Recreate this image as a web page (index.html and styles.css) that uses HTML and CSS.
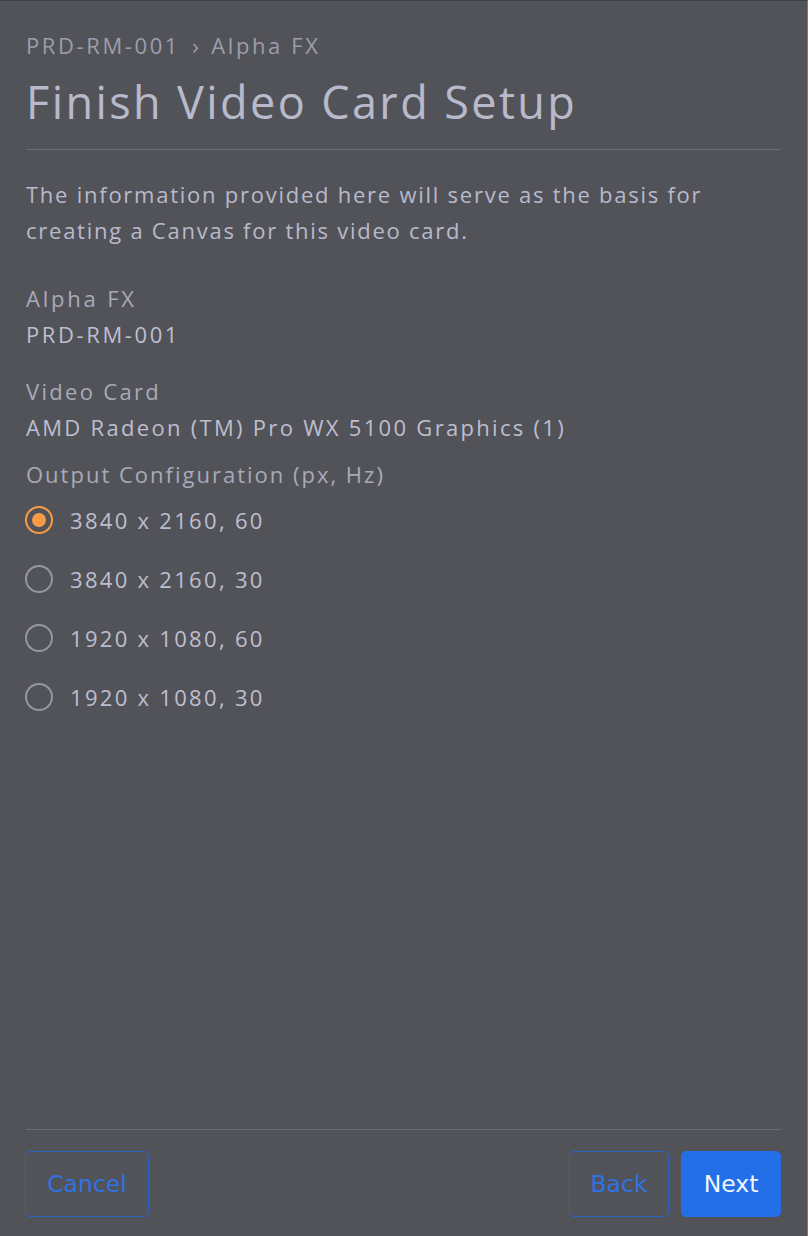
FILE: index.html
```html
<!DOCTYPE html>
<html lang="en">
<head>
<meta charset="utf-8">
<title>Finish Video Card Setup</title>
<link rel="stylesheet" href="styles.css">
</head>
<body>
<div class="page">
  <div class="content">
    <div class="breadcrumb">PRD-RM-001 <span class="sep">›</span> Alpha FX</div>
    <h1 class="title">Finish Video Card Setup</h1>
    <p class="intro">The information provided here will serve as the basis for creating a Canvas for this video card.</p>
    <div class="info info-first">
      <div class="label label-wide">Alpha FX</div>
      <div class="value value-wide">PRD-RM-001</div>
    </div>
    <div class="info info-card">
      <div class="label">Video Card</div>
      <div class="value">AMD Radeon (TM) Pro WX 5100 Graphics (1)</div>
    </div>
    <div class="label output-label">Output Configuration (px, Hz)</div>
    <div class="radios">
      <label class="radio checked"><span class="circle"></span><span class="rtext">3840 x 2160, 60</span></label>
      <label class="radio"><span class="circle"></span><span class="rtext">3840 x 2160, 30</span></label>
      <label class="radio"><span class="circle"></span><span class="rtext">1920 x 1080, 60</span></label>
      <label class="radio"><span class="circle"></span><span class="rtext">1920 x 1080, 30</span></label>
    </div>
  </div>
  <div class="footer">
    <button class="btn btn-outline btn-cancel">Cancel</button>
    <div class="right">
      <button class="btn btn-outline btn-back">Back</button>
      <button class="btn btn-primary">Next</button>
    </div>
  </div>
</div>
</body>
</html>
```

FILE: styles.css
```css
* { box-sizing: border-box; }
html, body { margin: 0; padding: 0; }
body {
  background: #525359;
  font-family: "Open Sans", "Liberation Sans", sans-serif;
  color: #b9b9cc;
}
.page {
  height: 1236px;
  display: flex;
  flex-direction: column;
  padding: 0 26px 0 26px;
  border-top: 1px solid #3e3f44;
  border-right: 1px solid #85786f;
}
.content { display: flex; flex-direction: column; }
.breadcrumb {
  margin-top: 27px;
  font-size: 22px;
  line-height: 34px;
  letter-spacing: 2.6px;
  color: #9d9dad;
}
.sep { margin: 0 4px; letter-spacing: 0; }
.title {
  margin: 12px 0 0;
  font-size: 45px;
  line-height: 56px;
  font-weight: 400;
  letter-spacing: 2.4px;
  color: #b9b9cc;
  padding-bottom: 19px;
  border-bottom: 1px solid #6b6c73;
}
.intro {
  margin: 26px 0 0;
  font-size: 22px;
  line-height: 36px;
  letter-spacing: 1.75px;
}
.info { display: flex; flex-direction: column; }
.info-first { margin-top: 32px; }
.info-card { margin-top: 21px; }
.label { font-size: 22px; line-height: 36px; color: #a9a9ba; letter-spacing: 2.3px; }
.value { font-size: 22px; line-height: 36px; color: #bebed0; letter-spacing: 2.3px; }
.label-wide { letter-spacing: 2.8px; }
.value-wide { letter-spacing: 2.6px; }
.output-label { margin-top: 11px; letter-spacing: 2px; }
.radios {
  display: flex;
  flex-direction: column;
  gap: 15px;
  margin-top: 6px;
}
.radio {
  display: flex;
  align-items: center;
  height: 44px;
  font-size: 22px;
  letter-spacing: 2.3px;
  color: #bebed0;
}
.circle {
  width: 28px;
  height: 28px;
  border-radius: 50%;
  border: 2.5px solid #96969f;
  margin-left: -1px;
  margin-right: 17px;
  display: flex;
  align-items: center;
  justify-content: center;
}
.checked .circle { border-color: #f79b46; }
.checked .circle::after {
  content: "";
  width: 14px;
  height: 14px;
  border-radius: 50%;
  background: #f79b46;
}
.footer {
  margin-top: auto;
  border-top: 1px solid #6b6c73;
  padding: 21px 0 19px;
  display: flex;
  justify-content: space-between;
}
.right { display: flex; gap: 12px; }
.btn {
  height: 66px;
  border-radius: 5px;
  font-family: "DejaVu Sans", Verdana, sans-serif;
  font-size: 23.5px;
  padding: 0;
  cursor: pointer;
}
.btn-outline {
  background: transparent;
  border: 1px solid #2c63c4;
  color: #2e72e3;
}
.btn-cancel { width: 124px; margin-left: -1px; }
.btn-back { width: 100px; }
.btn-primary {
  width: 100px;
  background: #236fe8;
  border: 1px solid #236fe8;
  color: #f2f4fb;
}
```
